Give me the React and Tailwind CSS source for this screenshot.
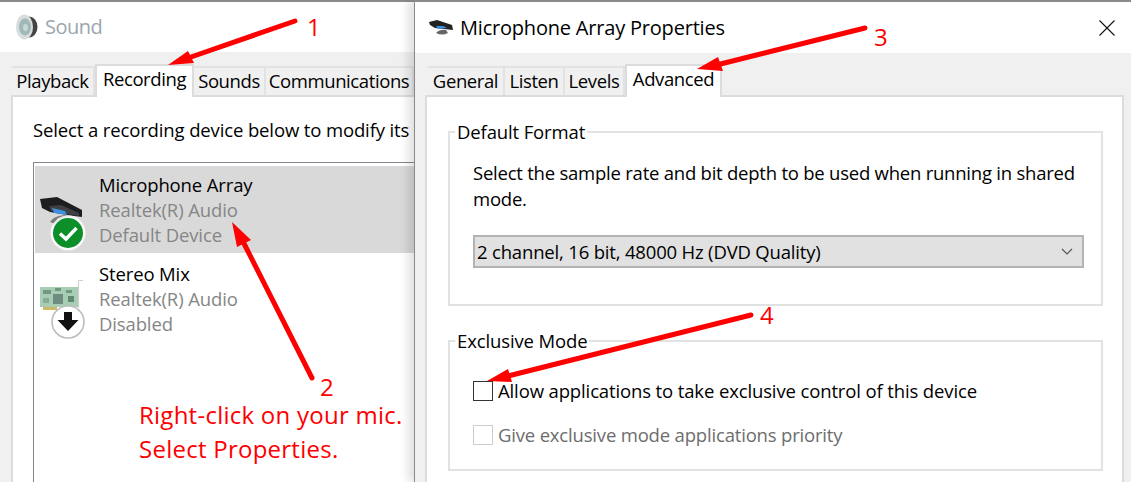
import React from 'react';

const fontStack = 'font-["Open_Sans","Noto_Sans",sans-serif]';
const bodyText = 'text-[18.5px] tracking-[-0.13px]';

const Tab = ({ label, width, active }) => (
  <div
    className={`flex justify-center border-t-2 border-r-2 ${width} ${
      active
        ? 'h-[33px] -mb-[2px] bg-white border-l-2 border-[#dcdcdc] pt-[1px] relative z-10'
        : 'h-[29px] bg-[#f0f0f0] border-[#e2e2e2] pt-[1px]'
    }`}
  >
    <span className="text-[18.5px] tracking-[-0.4px] leading-[24px] text-black whitespace-nowrap">{label}</span>
  </div>
);

const DeviceRow = ({ name, driver, status, selected, icon }) => (
  <div className={`flex h-[87px] ${selected ? 'bg-[#d9d9d9] pt-[6px]' : 'bg-white pt-[8px]'}`}>
    <div className={`w-[64px] shrink-0 ${selected ? '-mt-[6px]' : '-mt-[8px]'}`}>{icon}</div>
    <div className={`${bodyText} leading-[25px]`}>
      <div className="text-black">{name}</div>
      <div className="text-[#868686]">{driver}</div>
      <div className="text-[#868686]">{status}</div>
    </div>
  </div>
);

const MicIcon = () => (
  <svg width="64" height="87" viewBox="0 0 64 87" className="block">
    <path d="M15 56 Q18 50 30 49 L36 51 Q24 52 21 58 Z" fill="#7d7d7d" />
    <path d="M5 33 L22 31 L47 44 L47 51 L32 49 L15 46 L7 42 Z" fill="#1d1d1f" />
    <path d="M14 40 L26 39 L44 47 L44 50 L32 48 L16 45 Z" fill="#3e4044" />
    <path d="M17 42 L30 45 L32 49 L19 47 Z" fill="#3f8fe0" />
    <circle cx="33" cy="67" r="17.5" fill="#fff" fillOpacity="0.85" />
    <circle cx="33" cy="67" r="15" fill="#0c8f29" />
    <path d="M25 67.5 L31 73 L41.5 62" fill="none" stroke="#fff" strokeWidth="3.4" />
  </svg>
);

const CardIcon = () => (
  <svg width="64" height="87" viewBox="0 0 64 87" className="block">
    <rect x="5" y="34" width="38" height="20" fill="#a9ccb4" />
    <rect x="18" y="41" width="10" height="10" fill="#6f8c80" />
    <rect x="8" y="37" width="8" height="4" fill="#6f9a82" />
    <rect x="20" y="35" width="6" height="3" fill="#6f9a82" />
    <rect x="31" y="37" width="6" height="3" fill="#6f9a82" />
    <rect x="33" y="43" width="6" height="6" fill="#5f8a72" />
    <rect x="8" y="45" width="6" height="5" fill="#86ab96" />
    <rect x="8" y="54" width="14" height="3" fill="#cdb86e" />
    <path d="M43.5 27.5 H48 M43.5 27.5 V55" stroke="#cfcfcf" strokeWidth="1.2" fill="none" />
    <circle cx="33" cy="69" r="16" fill="#fff" stroke="#bdbdbd" strokeWidth="1.6" />
    <path d="M29 59 H37 V67 H43.5 L33 78 L22.5 67 H29 Z" fill="#111" />
  </svg>
);

const SpeakerIcon = () => (
  <svg width="24" height="26" viewBox="0 0 24 26" className="block">
    <ellipse cx="14" cy="13" rx="8.5" ry="10.5" fill="#444" />
    <ellipse cx="9.5" cy="13" rx="8.5" ry="12.5" fill="#d8dcdc" />
    <ellipse cx="10" cy="13" rx="6" ry="8.5" fill="#9fb8b8" />
    <ellipse cx="10.5" cy="13.5" rx="2.5" ry="3.5" fill="#c7d6d6" />
  </svg>
);

const GroupBox = ({ title, height, className, children }) => (
  <div className={`relative border-2 border-[#e2e2e2] ${height} ${className}`}>
    <span className={`absolute left-[5px] -top-[13px] bg-white px-[2px] ${bodyText} leading-[24px] text-black`}>
      {title}
    </span>
    {children}
  </div>
);

const Arrow = ({ from, tip, left, right, width = 5 }) => (
  <g>
    <line x1={from[0]} y1={from[1]} x2={(left[0] + right[0]) / 2} y2={(left[1] + right[1]) / 2} stroke="#fe0000" strokeWidth={width} strokeLinecap="round" />
    <polygon points={`${tip[0]},${tip[1]} ${left[0]},${left[1]} ${right[0]},${right[1]}`} fill="#fe0000" />
  </g>
);

const Note = ({ className, children }) => (
  <span className={`absolute text-[#fe0000] ${className}`}>{children}</span>
);

export default function App() {
  return (
    <div className={`relative flex w-[1131px] h-[482px] overflow-hidden bg-white ${fontStack}`}>
      {/* Ventana Sound */}
      <div className="w-[414px] shrink-0 overflow-hidden border-t-2 border-[#8a8a8a] flex flex-col">
        <div className="h-[50px] bg-white flex items-center pl-[15px] gap-[6px] shrink-0">
          <SpeakerIcon />
          <span className="text-[20px] tracking-[-0.5px] text-[#9aa5ad]">Sound</span>
        </div>
        <div className="flex-1 bg-[#f0f0f0] pl-[11px] pt-[12px] flex flex-col">
          <div className="flex items-end h-[31px] pl-[1px] shrink-0">
            <Tab label="Playback" width="w-[83px]" />
            <Tab label="Recording" width="w-[99px]" active />
            <Tab label="Sounds" width="w-[72px]" />
            <Tab label="Communications" width="w-[148px] shrink-0" />
          </div>
          <div className="flex-1 w-[420px] bg-white border-t-2 border-l-2 border-[#dcdcdc] pl-[20px] pt-[21px]">
            <div className={`h-[44px] ${bodyText} leading-[24px] text-black whitespace-nowrap`}>
              Select a recording device below to modify its
            </div>
            <div className="h-[400px] border border-[#82878f] border-r-0 bg-white pt-[3px] pl-[1px]">
              <DeviceRow name="Microphone Array" driver="Realtek(R) Audio" status="Default Device" selected icon={<MicIcon />} />
              <DeviceRow name="Stereo Mix" driver="Realtek(R) Audio" status="Disabled" icon={<CardIcon />} />
            </div>
          </div>
        </div>
      </div>

      {/* Ventana Properties */}
      <div className="relative z-20 flex-1 border-l border-t-2 border-[#8a8a8a] flex flex-col shadow-[-6px_0_9px_rgba(0,0,0,0.12)]">
        <div className="h-[51px] bg-white flex items-center justify-between pl-[13px] pr-[16px] shrink-0">
          <div className="flex items-center gap-[6px]">
            <svg width="26" height="20" viewBox="0 0 26 20" className="block">
              <path d="M1 4 L9 2 L24 7 L25 12 L16 11 L7 10 L2 7 Z" fill="#222" />
              <path d="M8 8 L15 8 L19 10 L10 11 Z" fill="#3f8fe0" />
              <path d="M8 15 Q12 11 18 12 L20 15 Q14 18 8 15 Z" fill="#666" />
            </svg>
            <span className="text-[20px] tracking-[-0.2px] text-black">Microphone Array Properties</span>
          </div>
          <svg width="16" height="16" viewBox="0 0 16 16" className="block">
            <path d="M0.5 0.5 L15.5 15.5 M15.5 0.5 L0.5 15.5" stroke="#111" strokeWidth="1.1" />
          </svg>
        </div>
        <div className="flex-1 bg-[#f0f0f0] pl-[10px] pr-[7px] pt-[11px] flex flex-col">
          <div className="flex items-end h-[31px] pl-[3px] shrink-0">
            <Tab label="General" width="w-[77px]" />
            <Tab label="Listen" width="w-[60px]" />
            <Tab label="Levels" width="w-[60px]" />
            <Tab label="Advanced" width="w-[97px]" active />
          </div>
          <div className="flex-1 bg-white border-t-2 border-x-2 border-[#dcdcdc] pl-[21px] pr-[19px] pt-[34px]">
            <GroupBox title="Default Format" height="h-[175px]" className="pl-[23px] pr-[17px] pt-[27px]">
              <p className="text-[18.5px] tracking-[-0.23px] leading-[26px] text-black">
                Select the sample rate and bit depth to be used when running in shared mode.
              </p>
              <div className="mt-[23px] h-[33px] bg-[#e1e1e1] border-2 border-[#b3b3b3] flex items-center justify-between pl-[2px] pr-[9px]">
                <span className="text-[18.5px] tracking-[-0.18px] pt-[1px] text-black">2 channel, 16 bit, 48000 Hz (DVD Quality)</span>
                <svg width="12" height="7" viewBox="0 0 12 7" className="block">
                  <path d="M1 1 L6 6 L11 1" fill="none" stroke="#555" strokeWidth="1.2" />
                </svg>
              </div>
            </GroupBox>
            <GroupBox title="Exclusive Mode" height="h-[131px]" className="mt-[34px] pl-[23px] pt-[37px]">
              <div className="flex items-center gap-[5px] h-[24px]">
                <div className="w-[20px] h-[20px] border border-[#333] bg-white shrink-0" />
                <span className={`${bodyText} text-black`}>Allow applications to take exclusive control of this device</span>
              </div>
              <div className="flex items-center gap-[5px] h-[24px] mt-[20px]">
                <div className="w-[20px] h-[20px] border border-[#cccccc] bg-white shrink-0" />
                <span className="text-[18.5px] tracking-[-0.18px] text-[#6d6d6d]">Give exclusive mode applications priority</span>
              </div>
            </GroupBox>
          </div>
        </div>
      </div>

      {/* Anotaciones */}
      <svg width="1131" height="482" viewBox="0 0 1131 482" className="absolute inset-0 z-30 pointer-events-none">
        <Arrow from={[295, 21]} tip={[168, 65]} left={[188, 51]} right={[194, 63]} />
        <Arrow from={[312, 378]} tip={[232, 222]} left={[251, 240]} right={[237, 247]} />
        <Arrow from={[865, 28]} tip={[697, 69]} left={[718, 57]} right={[723, 71]} />
        <Arrow from={[751, 315]} tip={[487, 381]} left={[508, 369]} right={[512, 382]} />
      </svg>
      <div className="absolute inset-0 z-40 pointer-events-none">
        <Note className="left-[307px] top-[11px] text-[24px] leading-[32px]">1</Note>
        <Note className="left-[320px] top-[375px] text-[24px] leading-[24px]">2</Note>
        <Note className="left-[874px] top-[21px] text-[24px] leading-[32px]">3</Note>
        <Note className="left-[760px] top-[299px] text-[24px] leading-[32px]">4</Note>
        <Note className="left-[139px] top-[401px] text-[24px] leading-[28px] tracking-[0.25px] whitespace-nowrap">Right-click on your mic.</Note>
        <Note className="left-[139px] top-[435px] text-[24px] leading-[28px] tracking-[0.25px] whitespace-nowrap">Select Properties.</Note>
      </div>
    </div>
  );
}
